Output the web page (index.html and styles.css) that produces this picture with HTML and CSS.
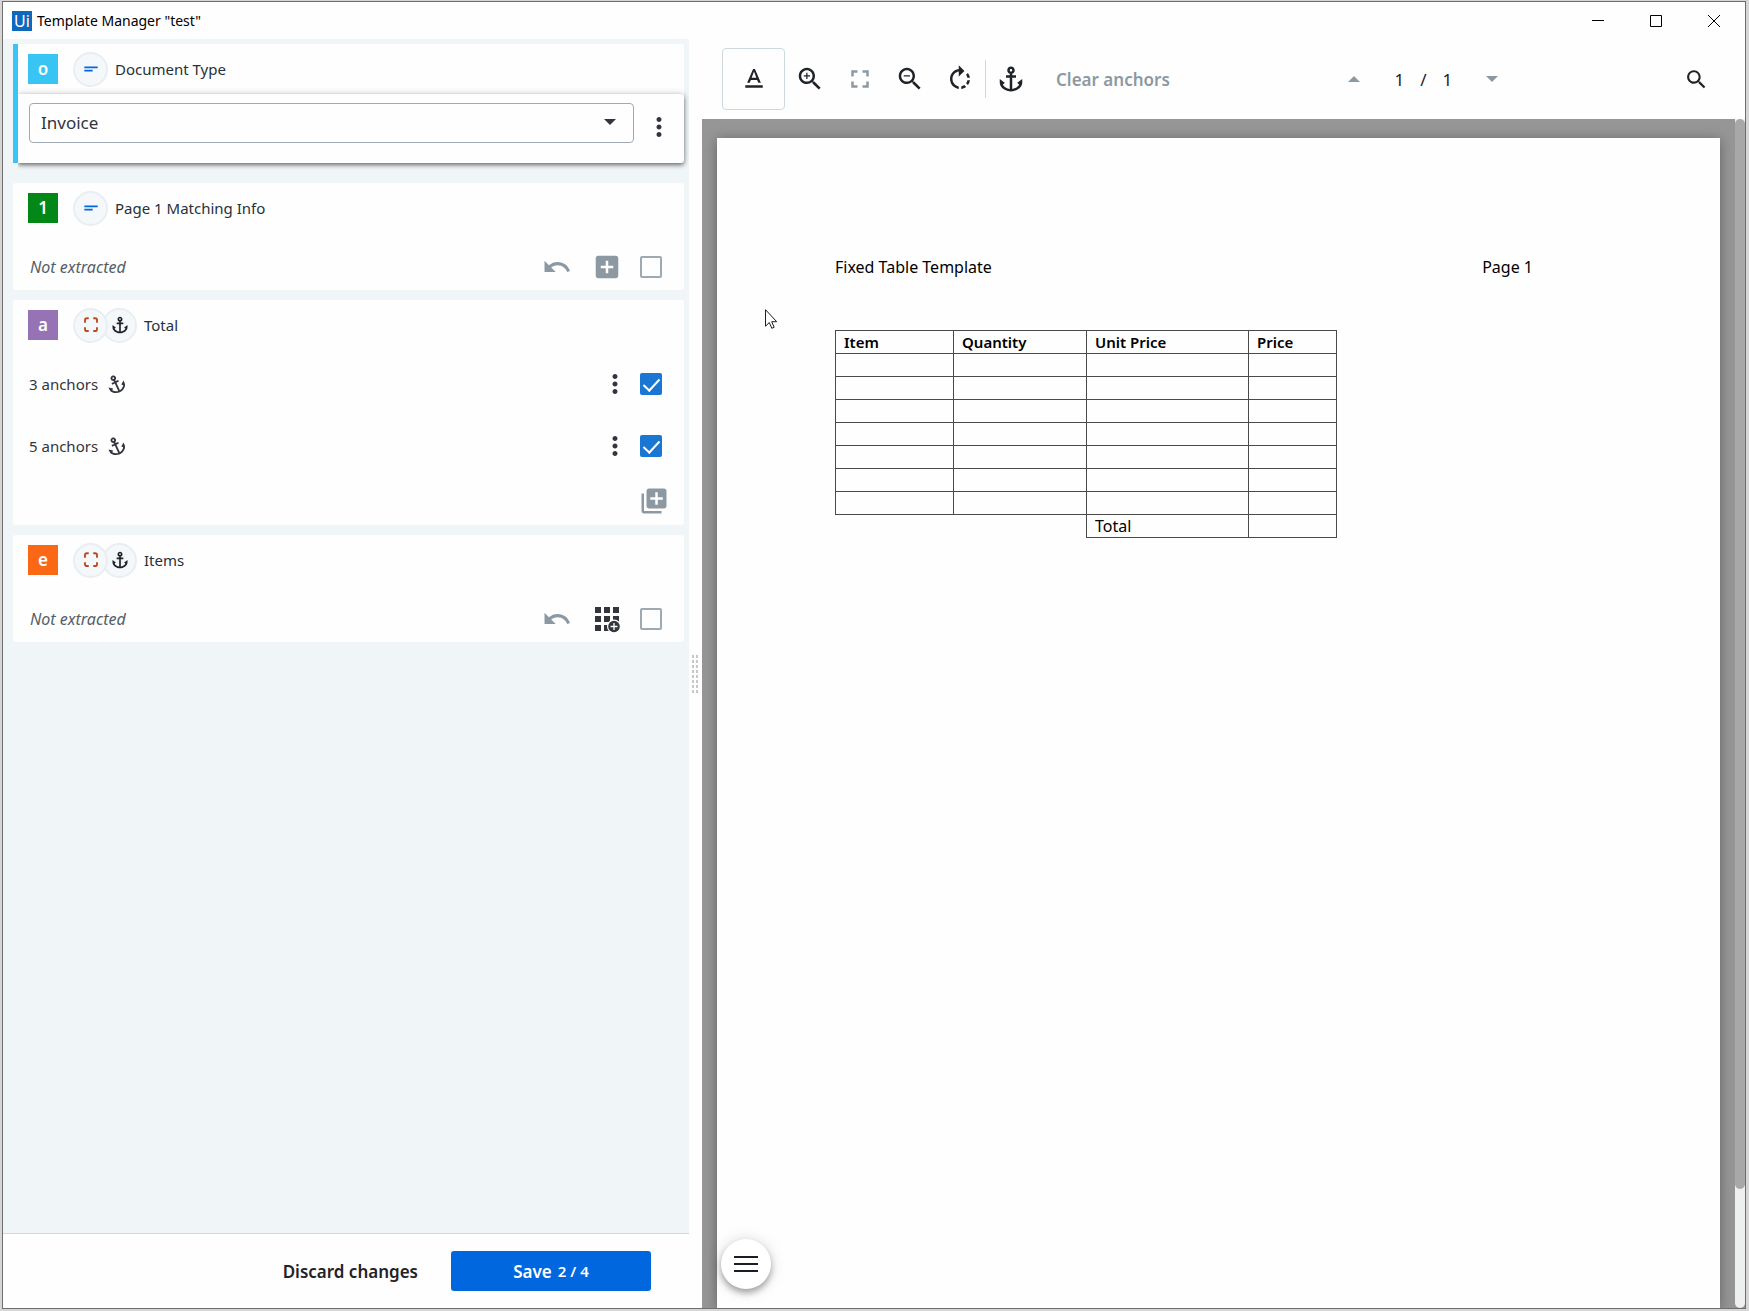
FILE: index.html
```html
<!DOCTYPE html>
<html lang="en">
<head>
    <meta charset="UTF-8">
    <meta name="viewport" content="width=device-width, initial-scale=1.0">
    <title>Template Manager "test"</title>
    <link rel="stylesheet" href="styles.css">
</head>
<body>
    <!-- Shared icons -->
    <svg class="sprite" aria-hidden="true">
        <symbol id="i-text" viewBox="0 0 24 24"><path d="M4 9h16v2H4zM4 13h10v2H4z"/></symbol>
        <symbol id="i-anchor" viewBox="0 0 24 24"><path d="M17 15l1.55 1.55c-.96 1.69-3.33 3.04-5.55 3.37V11h3V9h-3V7.82C14.16 7.4 15 6.3 15 5c0-1.65-1.35-3-3-3S9 3.35 9 5c0 1.3.84 2.4 2 2.82V9H8v2h3v8.92c-2.22-.33-4.59-1.68-5.55-3.37L7 15l-4-3v3c0 3.88 4.92 7 9 7s9-3.12 9-7v-3l-4 3zM12 4c.55 0 1 .45 1 1s-.45 1-1 1-1-.45-1-1 .45-1 1-1z"/></symbol>
        <symbol id="i-frame" viewBox="0 0 24 24"><path d="M4 9V5.500Q4 3 6.500 3H9M15 3h2.500Q20 3 20 5.500V9M20 15v2.500Q20 20 17.500 20H15M9 20H6.500Q4 20 4 17.500V15" fill="none" stroke="currentColor" stroke-width="2.500"/></symbol>
        <symbol id="i-full" viewBox="0 0 24 24"><path d="M7 14H5v5h5v-2H7v-3zM5 10h2V7h3V5H5v5zm12 7h-3v2h5v-5h-2v3zM14 5v2h3v3h2V5h-5z"/></symbol>
        <symbol id="i-dots" viewBox="0 0 24 24"><path d="M12 8c1.100 0 2-.9 2-2s-.9-2-2-2-2 .9-2 2 .9 2 2 2zm0 2c-1.100 0-2 .9-2 2s.9 2 2 2 2-.9 2-2-.9-2-2-2zm0 6c-1.100 0-2 .9-2 2s.9 2 2 2 2-.9 2-2-.9-2-2-2z"/></symbol>
        <symbol id="i-undo" viewBox="0 0 24 24"><path d="M12.500 8c-2.650 0-5.050.99-6.900 2.600L2 7v9h9l-3.620-3.620c1.390-1.160 3.160-1.880 5.120-1.880 3.540 0 6.550 2.310 7.600 5.500l2.370-.78C21.080 11.030 17.150 8 12.500 8z"/></symbol>
        <symbol id="i-add" viewBox="0 0 24 24"><path d="M19 3H5c-1.110 0-2 .9-2 2v14c0 1.100.89 2 2 2h14c1.100 0 2-.9 2-2V5c0-1.100-.9-2-2-2zm-2 10h-4v4h-2v-4H7v-2h4V7h2v4h4v2z"/></symbol>
        <symbol id="i-library-add" viewBox="0 0 24 24"><path d="M4 6H2v14c0 1.100.9 2 2 2h14v-2H4V6zm16-4H8c-1.100 0-2 .9-2 2v12c0 1.100.9 2 2 2h12c1.100 0 2-.9 2-2V4c0-1.100-.9-2-2-2zm-1 9h-4v4h-2v-4H9V9h4V5h2v4h4v2z"/></symbol>
        <symbol id="i-grid-add" viewBox="0 0 30 30">
            <path d="M3 3h6v6H3zM12 3h6v6h-6zM21 3h6v6h-6zM3 12h6v6H3zM12 12h6v6h-6zM21 12h6v6h-6zM3 21h6v6H3zM12 21h6v6h-6z"/>
            <circle cx="22" cy="22.500" r="7" fill="#fff"/>
            <circle cx="22" cy="22.500" r="5.800"/>
            <path d="M22 19v7M18.500 22.500h7" stroke="#fff" stroke-width="1.300"/>
        </symbol>
    </svg>

    <div class="window">
        <header class="title-bar">
            <span class="app-icon">Ui</span>
            <h1 class="window-title">Template Manager "test"</h1>
            <div class="window-controls">
                <button class="window-btn" type="button" aria-label="Minimize"><svg viewBox="0 0 12 12"><path d="M0 5.500h12"/></svg></button>
                <button class="window-btn" type="button" aria-label="Maximize"><svg viewBox="0 0 12 12"><path d="M.5.5h11v11H.5z"/></svg></button>
                <button class="window-btn" type="button" aria-label="Close"><svg viewBox="0 0 12 12"><path d="M0 0l12 12M12 0L0 12"/></svg></button>
            </div>
        </header>

        <div class="content">
            <!-- Field list -->
            <section class="panel">
                <div class="fields">
                    <div class="card active">
                        <div class="card-header">
                            <span class="badge sky">o</span>
                            <span class="types"><span class="type-icon blue"><svg><use href="#i-text"/></svg></span></span>
                            <label class="field-name" for="doc-type">Document Type</label>
                        </div>
                        <div class="card-select">
                            <div class="select-box">
                                <select id="doc-type"><option>Invoice</option></select>
                                <svg class="caret" viewBox="0 0 12 6"><path d="M0 0h12L6 6z"/></svg>
                            </div>
                            <button class="icon-btn dark" type="button" aria-label="Document type options"><svg><use href="#i-dots"/></svg></button>
                        </div>
                    </div>

                    <div class="card">
                        <div class="card-header">
                            <span class="badge green">1</span>
                            <span class="types"><span class="type-icon blue"><svg><use href="#i-text"/></svg></span></span>
                            <span class="field-name">Page 1 Matching Info</span>
                        </div>
                        <div class="card-empty">
                            <label class="empty" for="check-page">Not extracted</label>
                            <button class="action-btn" type="button" aria-label="Undo"><svg><use href="#i-undo"/></svg></button>
                            <button class="action-btn" type="button" aria-label="Add value"><svg><use href="#i-add"/></svg></button>
                            <input class="check" type="checkbox" id="check-page">
                        </div>
                    </div>

                    <div class="card">
                        <div class="card-header">
                            <span class="badge purple">a</span>
                            <span class="types">
                                <span class="type-icon rust"><svg><use href="#i-frame"/></svg></span>
                                <span class="type-icon"><svg><use href="#i-anchor"/></svg></span>
                            </span>
                            <span class="field-name">Total</span>
                        </div>
                        <div class="anchor-row">
                            <label for="check-3">3 anchors</label>
                            <svg class="tilted"><use href="#i-anchor"/></svg>
                            <button class="icon-btn dark" type="button" aria-label="Options"><svg><use href="#i-dots"/></svg></button>
                            <input class="check" type="checkbox" id="check-3" checked>
                        </div>
                        <div class="anchor-row">
                            <label for="check-5">5 anchors</label>
                            <svg class="tilted"><use href="#i-anchor"/></svg>
                            <button class="icon-btn dark" type="button" aria-label="Options"><svg><use href="#i-dots"/></svg></button>
                            <input class="check" type="checkbox" id="check-5" checked>
                        </div>
                        <div class="add-row">
                            <button class="icon-btn" type="button" aria-label="Add anchors"><svg><use href="#i-library-add"/></svg></button>
                        </div>
                    </div>

                    <div class="card">
                        <div class="card-header">
                            <span class="badge orange">e</span>
                            <span class="types">
                                <span class="type-icon rust"><svg><use href="#i-frame"/></svg></span>
                                <span class="type-icon"><svg><use href="#i-anchor"/></svg></span>
                            </span>
                            <span class="field-name">Items</span>
                        </div>
                        <div class="card-empty">
                            <label class="empty" for="check-items">Not extracted</label>
                            <button class="action-btn" type="button" aria-label="Undo"><svg><use href="#i-undo"/></svg></button>
                            <button class="action-btn dark" type="button" aria-label="Add table"><svg><use href="#i-grid-add"/></svg></button>
                            <input class="check" type="checkbox" id="check-items">
                        </div>
                    </div>
                </div>

                <footer class="panel-footer">
                    <button class="discard" type="button">Discard changes</button>
                    <button class="save" type="button">Save <span class="save-count">2 / 4</span></button>
                </footer>
            </section>

            <div class="splitter"><div class="grip"></div></div>

            <!-- Document viewer -->
            <section class="viewer">
                <div class="toolbar">
                    <div class="tools">
                        <button class="tool selected" type="button" aria-label="Text selection"><svg viewBox="0 0 24 24"><path d="M5 17v2h14v-2H5zm4.500-4.200h5l.9 2.200h2.100L12.750 4h-1.500L6.500 15h2.100l.9-2.200zM12 5.980L13.870 11h-3.740L12 5.980z"/></svg></button>
                        <button class="tool" type="button" aria-label="Zoom in"><svg viewBox="0 0 24 24"><path d="M15.500 14h-.79l-.28-.27C15.410 12.590 16 11.110 16 9.500 16 5.910 13.090 3 9.500 3S3 5.910 3 9.500 5.910 16 9.500 16c1.610 0 3.090-.59 4.230-1.570l.27.28v.79l5 4.990L20.490 19l-4.990-5zm-6 0C7.010 14 5 11.990 5 9.500S7.010 5 9.500 5 14 7.010 14 9.500 11.990 14 9.500 14zm2.500-4h-2v2H9v-2H7V9h2V7h1v2h2v1z"/></svg></button>
                        <button class="tool muted" type="button" aria-label="Fit to screen"><svg><use href="#i-full"/></svg></button>
                        <button class="tool" type="button" aria-label="Zoom out"><svg viewBox="0 0 24 24"><path d="M15.500 14h-.79l-.28-.27C15.410 12.590 16 11.110 16 9.500 16 5.910 13.090 3 9.500 3S3 5.910 3 9.500 5.910 16 9.500 16c1.610 0 3.090-.59 4.230-1.570l.27.28v.79l5 4.990L20.490 19l-4.990-5zm-6 0C7.010 14 5 11.990 5 9.500S7.010 5 9.500 5 14 7.010 14 9.500 11.990 14 9.500 14zM7 9h5v1H7z"/></svg></button>
                        <button class="tool" type="button" aria-label="Rotate"><svg viewBox="0 0 24 24"><path d="M15.550 5.550L11 1v3.070C7.060 4.560 4 7.920 4 12s3.050 7.440 7 7.930v-2.020c-2.840-.48-5-2.940-5-5.910s2.160-5.430 5-5.910V10l4.550-4.450zM19.930 11c-.17-1.390-.72-2.730-1.620-3.890l-1.420 1.420c.54.75.88 1.600 1.020 2.470h2.020zM13 17.900v2.020c1.390-.17 2.740-.71 3.900-1.610l-1.440-1.440c-.75.54-1.590.89-2.460 1.030zm3.890-2.420l1.420 1.410c.9-1.160 1.450-2.500 1.620-3.890h-2.020c-.14.87-.48 1.720-1.020 2.480z"/></svg></button>
                        <span class="divider"></span>
                        <button class="tool" type="button" aria-label="Anchors"><svg><use href="#i-anchor"/></svg></button>
                        <button class="clear" type="button">Clear anchors</button>
                    </div>
                    <div class="pager">
                        <button class="page-btn" type="button" aria-label="Previous page"><svg viewBox="0 0 12 6"><path d="M0 6h12L6 0z"/></svg></button>
                        <span class="page-numbers"><span>1</span><span>/</span><span>1</span></span>
                        <button class="page-btn" type="button" aria-label="Next page"><svg viewBox="0 0 12 6"><path d="M0 0h12L6 6z"/></svg></button>
                    </div>
                    <button class="search" type="button" aria-label="Search"><svg viewBox="0 0 24 24"><path d="M15.500 14h-.79l-.28-.27C15.410 12.590 16 11.110 16 9.500 16 5.910 13.090 3 9.500 3S3 5.910 3 9.500 5.910 16 9.500 16c1.610 0 3.090-.59 4.230-1.570l.27.28v.79l5 4.990L20.490 19l-4.990-5zm-6 0C7.010 14 5 11.990 5 9.500S7.010 5 9.500 5 14 7.010 14 9.500 11.990 14 9.500 14z"/></svg></button>
                </div>

                <div class="document">
                    <article class="paper">
                        <div class="paper-head"><span>Fixed Table Template</span><span>Page 1</span></div>
                        <table class="items">
                            <colgroup><col class="col-item"><col class="col-qty"><col class="col-unit"><col class="col-price"></colgroup>
                            <thead>
                                <tr><th>Item</th><th>Quantity</th><th>Unit Price</th><th>Price</th></tr>
                            </thead>
                            <tbody>
                                <tr><td></td><td></td><td></td><td></td></tr>
                                <tr><td></td><td></td><td></td><td></td></tr>
                                <tr><td></td><td></td><td></td><td></td></tr>
                                <tr><td></td><td></td><td></td><td></td></tr>
                                <tr><td></td><td></td><td></td><td></td></tr>
                                <tr><td></td><td></td><td></td><td></td></tr>
                                <tr><td></td><td></td><td></td><td></td></tr>
                                <tr><td class="blank" colspan="2"></td><td>Total</td><td></td></tr>
                            </tbody>
                        </table>
                    </article>
                    <div class="scrollbar"><div class="thumb"></div></div>
                    <button class="menu-fab" type="button" aria-label="Menu"><svg viewBox="0 0 24 16"><path d="M0 1h24M0 8h24M0 15h24"/></svg></button>
                    <svg class="pointer" viewBox="0 0 13 20"><path d="M.5.700v16.500l3.800-3.700 2.500 5.800 2.400-1-2.500-5.600h5z"/></svg>
                </div>
            </section>
        </div>
    </div>
</body>
</html>
```

FILE: styles.css
```css
* {
    box-sizing: border-box;
}
body {
    margin: 0;
    height: 100vh;
    padding: 1px 3px 2px 2px;
    background-color: #d6d6d6;
    color: #273139;
    font-family: "Noto Sans", sans-serif;
    font-size: 15px;
    overflow: hidden;
}
button {
    display: flex;
    align-items: center;
    justify-content: center;
    padding: 0;
    border: 0;
    background: none;
    color: inherit;
    font: inherit;
    cursor: pointer;
}
svg {
    display: block;
    fill: currentColor;
}
.sprite {
    display: none;
}
.window {
    display: flex;
    flex-direction: column;
    height: 100%;
    border: 1px solid #6e6e6e;
    background-color: #fefefe;
}

/* Title bar */
.title-bar {
    display: flex;
    align-items: center;
    height: 37px;
    padding: 0 2px 0 9px;
    gap: 5px;
    flex: none;
}
.app-icon {
    width: 20px;
    height: 20px;
    background-color: #1068bc;
    color: #fff;
    font-size: 16px;
    line-height: 20px;
    text-align: center;
}
.window-title {
    margin: 0;
    color: #000;
    font-size: 14px;
    font-weight: 400;
}
.window-controls {
    display: flex;
    margin-left: auto;
}
.window-btn {
    width: 58px;
    height: 36px;
}
.window-btn svg {
    width: 12px;
    height: 12px;
    fill: none;
    stroke: #000;
    stroke-width: 1;
}

.content {
    display: grid;
    grid-template-columns: minmax(0, 686fr) 13px minmax(0, 1043fr);
    flex: 1;
    min-height: 0;
}

/* Left panel */
.panel {
    display: flex;
    flex-direction: column;
    min-height: 0;
}
.fields {
    display: flex;
    flex-direction: column;
    flex: 1;
    gap: 10px;
    padding: 5px 5px 5px 10px;
    background-color: #f0f5f8;
    overflow: hidden;
}
.card {
    flex: none;
    border-radius: 3px;
    background-color: #fefefe;
}
.active {
    margin-bottom: 10px;
    border-left: 5px solid #38c5f4;
    border-radius: 0 3px 3px 0;
}
.card-header {
    display: flex;
    align-items: center;
    height: 50px;
    padding-left: 15px;
}
.active .card-header {
    padding-left: 10px;
}
.badge {
    width: 30px;
    height: 30px;
    margin-right: 15px;
    color: #fff;
    font-size: 17px;
    font-weight: 600;
    line-height: 30px;
    text-align: center;
}
.sky { background-color: #38c5f4; }
.green { background-color: #038817; }
.purple { background-color: #9673b4; }
.orange { background-color: #fa6816; }
.types {
    display: flex;
    margin-right: 7px;
}
.type-icon {
    display: flex;
    align-items: center;
    justify-content: center;
    width: 35px;
    height: 35px;
    border: 2px solid #e9eef1;
    border-radius: 50%;
    background-color: #f4f8fb;
    color: #1f2328;
}
.type-icon svg {
    width: 20px;
    height: 20px;
}
.type-icon + .type-icon {
    margin-left: -6px;
}
.type-icon:first-child {
    z-index: 1;
}
.type-icon.blue { color: #0067df; }
.type-icon.rust { color: #bb4b1f; }
.rust svg {
    width: 18px;
    height: 18px;
}
.card-select {
    display: flex;
    align-items: flex-start;
    height: 69px;
    padding: 9px 10px 0 11px;
    gap: 10px;
    border-radius: 0 3px 3px 0;
    box-shadow: 0 2px 4px rgba(0, 0, 0, 0.5), 0 0 8px rgba(0, 0, 0, 0.15);
    clip-path: inset(-6px -8px -8px 0);
}
.card-select .icon-btn {
    height: 48px;
}
.select-box {
    position: relative;
    flex: 1;
}
.select-box select {
    width: 100%;
    height: 40px;
    padding: 0 11px 2px;
    border: 1px solid #9ea9b2;
    border-radius: 4px;
    background-color: #fefefe;
    color: #32353d;
    font: inherit;
    font-size: 17px;
    appearance: none;
}
.caret {
    position: absolute;
    top: 16px;
    right: 18px;
    width: 12px;
    height: 6px;
    color: #32353d;
    pointer-events: none;
}
.icon-btn {
    width: 30px;
    height: 30px;
    color: #8d99a2;
}
.icon-btn svg,
.action-btn svg {
    width: 30px;
    height: 30px;
}
.action-btn {
    width: 50px;
    height: 30px;
    color: #8d99a2;
}
.dark {
    color: #32353d;
}
.card-empty {
    display: flex;
    align-items: center;
    height: 47px;
    margin-top: 10px;
    padding: 0 22px 0 17px;
}
.empty {
    flex: 1;
    color: #526069;
    font-size: 16px;
    font-style: italic;
}
.anchor-row {
    display: flex;
    align-items: center;
    height: 62px;
    padding: 0 22px 0 16px;
    color: #32353d;
}
.anchor-row:nth-child(2) {
    margin-top: 3px;
}
.anchor-row .icon-btn {
    margin: 0 2px 0 auto;
}
.tilted {
    width: 22px;
    height: 22px;
    margin-left: 7px;
    transform: rotate(-25deg);
}
.check {
    display: flex;
    justify-content: center;
    width: 22px;
    height: 22px;
    margin: 0 0 0 8px;
    border: 2px solid #9ea9b2;
    border-radius: 2px;
    appearance: none;
}
.check:checked {
    border-color: #1976d2;
    background-color: #1976d2;
}
.check:checked::after {
    content: "";
    width: 7px;
    height: 14px;
    border: solid #fff;
    border-width: 0 2px 2px 0;
    transform: rotate(43deg);
}
.add-row {
    display: flex;
    align-items: center;
    justify-content: flex-end;
    height: 48px;
    padding-right: 15px;
}
.panel-footer {
    display: flex;
    align-items: center;
    justify-content: flex-end;
    height: 75px;
    padding-right: 38px;
    gap: 33px;
    border-top: 1px solid #cfd8dd;
    font-size: 17px;
    font-weight: 600;
}
.discard {
    color: #1f2328;
}
.save {
    width: 200px;
    height: 40px;
    gap: 6px;
    border-radius: 3px;
    background-color: #0067df;
    color: #fff;
}
.save-count {
    font-size: 15px;
}

/* Splitter between the panel and the viewer */
.splitter {
    display: flex;
    align-items: center;
    padding-left: 3px;
}
.grip {
    width: 6px;
    height: 38px;
    background-image: linear-gradient(90deg, transparent 2px, #fefefe 2px, #fefefe 4px, transparent 4px), repeating-linear-gradient(#c8c8c8 0 3px, transparent 3px 5px);
}

/* Viewer */
.viewer {
    display: flex;
    flex-direction: column;
    min-height: 0;
}
.toolbar {
    display: flex;
    align-items: center;
    justify-content: space-between;
    height: 80px;
    padding: 0 28px 0 20px;
    flex: none;
    color: #1f2328;
}
.tools {
    display: flex;
    align-items: center;
}
.tool {
    width: 50px;
    height: 62px;
}
.tool svg {
    width: 30px;
    height: 30px;
}
.selected {
    width: 63px;
    border: 1px solid #cfd8dd;
    border-radius: 4px;
}
.muted {
    color: #8d99a2;
}
.divider {
    width: 1px;
    height: 38px;
    background-color: #cfd8dd;
}
.clear {
    margin-left: 20px;
    color: #8d99a2;
    font-size: 17px;
    font-weight: 600;
}
.pager {
    display: flex;
    align-items: center;
    justify-content: space-between;
    width: 162px;
}
.page-btn {
    width: 24px;
    height: 24px;
    color: #8d99a2;
}
.page-btn svg {
    width: 12px;
    height: 6px;
}
.page-numbers {
    display: flex;
    gap: 16px;
    font-size: 17px;
}
.search {
    width: 40px;
    height: 40px;
}
.search svg {
    width: 25px;
    height: 25px;
}
.document {
    position: relative;
    display: flex;
    flex: 1;
    min-height: 0;
    background-color: #969696;
    overflow: hidden;
}
.paper {
    flex: 1;
    margin: 19px 15px 0;
    padding: 117px 187px 0 118px;
    background-color: #fefefe;
    box-shadow: 0 2px 12px rgba(0, 0, 0, 0.35);
    color: #000;
    font-size: 16px;
}
.paper-head {
    display: flex;
    justify-content: space-between;
    margin-bottom: 51px;
    line-height: 24px;
}
.items {
    width: 502px;
    border-collapse: collapse;
    table-layout: fixed;
    line-height: 20px;
}
.items tr {
    height: 23px;
}
.col-item { width: 118px; }
.col-qty { width: 133px; }
.col-unit { width: 162px; }
.items th,
.items td {
    padding: 0 8px;
    border: 1px solid #4a4a4a;
    text-align: left;
}
.items th {
    font-size: 15px;
    font-weight: 600;
}
.items .blank {
    border-bottom: 0;
    border-left: 0;
}
.scrollbar {
    width: 10px;
    border-radius: 0 0 5px 5px;
    background-color: #eef0f0;
}
.thumb {
    height: 90%;
    border-radius: 5px;
    background-color: #a8a8a8;
}
.menu-fab {
    position: absolute;
    bottom: 19px;
    left: 19px;
    width: 50px;
    height: 50px;
    border-radius: 50%;
    background-color: #fff;
    box-shadow: 0 4px 6px rgba(0, 0, 0, 0.3), 0 1px 16px rgba(0, 0, 0, 0.15);
}
.menu-fab svg {
    width: 24px;
    height: 16px;
    stroke: #1a1c28;
    stroke-width: 2;
}
.pointer {
    position: absolute;
    top: 190px;
    left: 63px;
    width: 13px;
    height: 20px;
    fill: #fff;
    stroke: #1a1c28;
}
```
